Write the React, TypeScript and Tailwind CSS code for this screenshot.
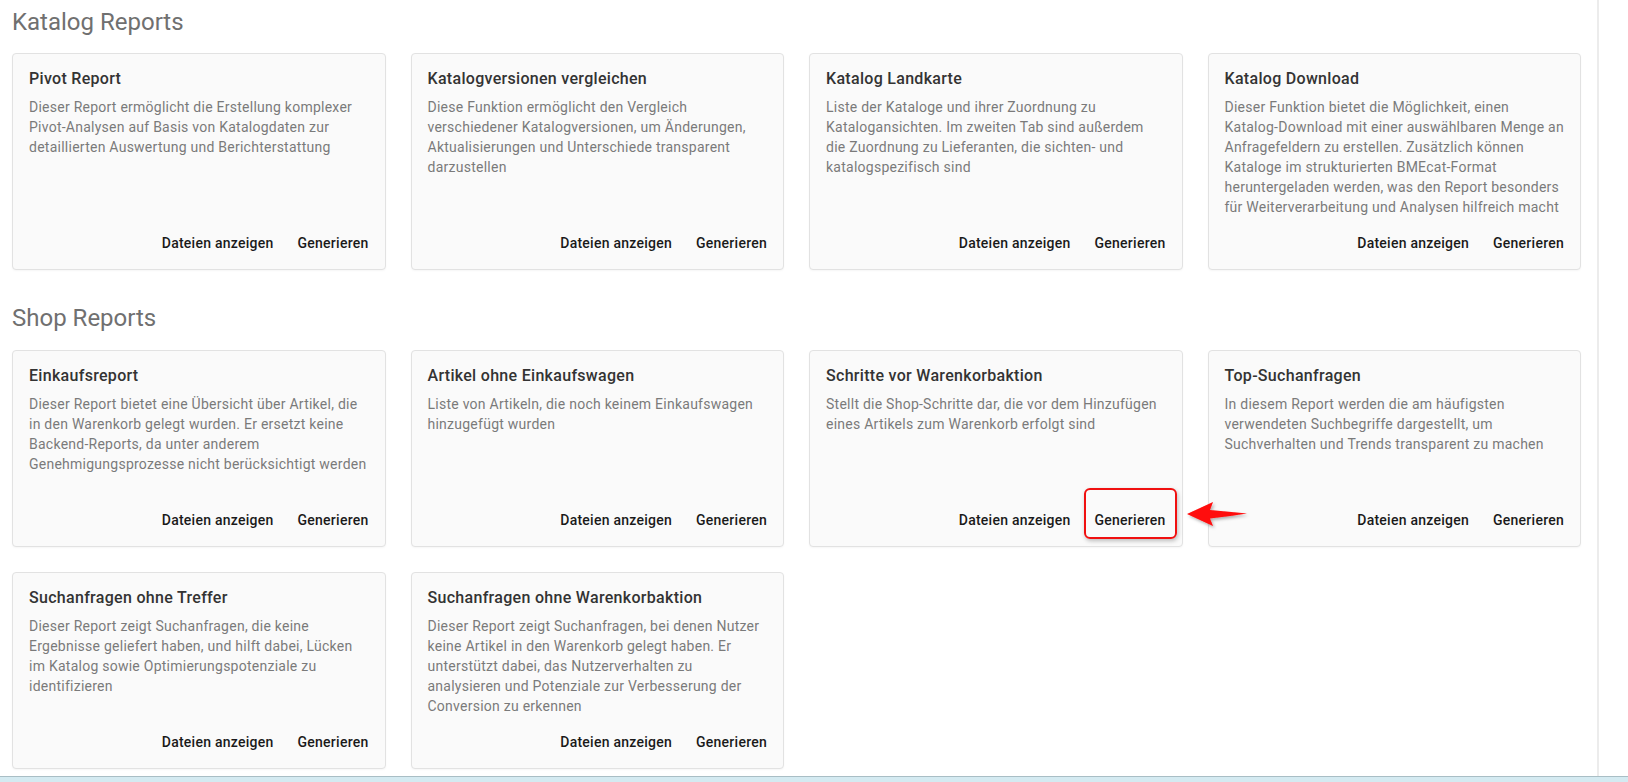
type Report = {
  title: string;
  text: string;
  marked?: boolean;
};

const katalogReports: Report[] = [
  {
    title: "Pivot Report",
    text: "Dieser Report ermöglicht die Erstellung komplexer Pivot-Analysen auf Basis von Katalogdaten zur detaillierten Auswertung und Berichterstattung",
  },
  {
    title: "Katalogversionen vergleichen",
    text: "Diese Funktion ermöglicht den Vergleich verschiedener Katalogversionen, um Änderungen, Aktualisierungen und Unterschiede transparent darzustellen",
  },
  {
    title: "Katalog Landkarte",
    text: "Liste der Kataloge und ihrer Zuordnung zu Katalogansichten. Im zweiten Tab sind außerdem die Zuordnung zu Lieferanten, die sichten- und katalogspezifisch sind",
  },
  {
    title: "Katalog Download",
    text: "Dieser Funktion bietet die Möglichkeit, einen Katalog-Download mit einer auswählbaren Menge an Anfragefeldern zu erstellen. Zusätzlich können Kataloge im strukturierten BMEcat-Format heruntergeladen werden, was den Report besonders für Weiterverarbeitung und Analysen hilfreich macht",
  },
];

const shopReports: Report[] = [
  {
    title: "Einkaufsreport",
    text: "Dieser Report bietet eine Übersicht über Artikel, die in den Warenkorb gelegt wurden. Er ersetzt keine Backend-Reports, da unter anderem Genehmigungsprozesse nicht berücksichtigt werden",
  },
  {
    title: "Artikel ohne Einkaufswagen",
    text: "Liste von Artikeln, die noch keinem Einkaufswagen hinzugefügt wurden",
  },
  {
    title: "Schritte vor Warenkorbaktion",
    text: "Stellt die Shop-Schritte dar, die vor dem Hinzufügen eines Artikels zum Warenkorb erfolgt sind",
    marked: true,
  },
  {
    title: "Top-Suchanfragen",
    text: "In diesem Report werden die am häufigsten verwendeten Suchbegriffe dargestellt, um Suchverhalten und Trends transparent zu machen",
  },
  {
    title: "Suchanfragen ohne Treffer",
    text: "Dieser Report zeigt Suchanfragen, die keine Ergebnisse geliefert haben, und hilft dabei, Lücken im Katalog sowie Optimierungspotenziale zu identifizieren",
  },
  {
    title: "Suchanfragen ohne Warenkorbaktion",
    text: "Dieser Report zeigt Suchanfragen, bei denen Nutzer keine Artikel in den Warenkorb gelegt haben. Er unterstützt dabei, das Nutzerverhalten zu analysieren und Potenziale zur Verbesserung der Conversion zu erkennen",
  },
];

function RedArrow() {
  return (
    <svg
      className="absolute left-[calc(100%+11px)] top-[-5px] overflow-visible"
      width="66"
      height="34"
      viewBox="0 0 66 34"
    >
      <defs>
        <filter id="arrowShadow" x="-20%" y="-40%" width="150%" height="190%">
          <feDropShadow dx="1.5" dy="2" stdDeviation="1.5" floodColor="#000" floodOpacity="0.3" />
        </filter>
      </defs>
      <path
        d="M2 17 L28 5 L25 13 Q44 14.5 62 16.5 Q44 19.5 25 21.5 L28 29 Z"
        fill="#ff0a0a"
        filter="url(#arrowShadow)"
      />
    </svg>
  );
}

function ReportCard({ report }: { report: Report }) {
  return (
    <div className="flex flex-col rounded border border-[#e2e2e2] bg-[#fafafa] shadow-[0_1px_2px_rgba(0,0,0,0.04)]">
      <div className="flex-1 px-4 pt-[15px]">
        <h3 className="text-base leading-5 font-medium tracking-[0.3px] text-[#333333]">{report.title}</h3>
        <p className="mt-2 min-h-[100px] text-sm leading-5 tracking-[0.25px] text-[#7a7a7a]">{report.text}</p>
      </div>
      <div className="flex justify-end gap-2 p-2">
        <button className="h-9 px-2 text-sm font-medium tracking-[0.25px] text-[#1a1a1a]">Dateien anzeigen</button>
        <div className="relative">
          <button className="h-9 px-2 text-sm font-medium tracking-[0.25px] text-[#1a1a1a]">Generieren</button>
          {report.marked && (
            <>
              <div className="pointer-events-none absolute -left-[3px] -right-[3px] -top-[14px] -bottom-px rounded-md border-2 border-[#f01010] shadow-[1px_2px_4px_rgba(0,0,0,0.25)]" />
              <RedArrow />
            </>
          )}
        </div>
      </div>
    </div>
  );
}

export default function App() {
  return (
    <div className="flex h-[782px] w-[1628px] flex-col overflow-hidden bg-white font-['Roboto',sans-serif]">
      <div className="flex min-h-0 flex-1">
        <main className="flex-1 overflow-hidden pl-3 pr-4">
          <h2 className="mt-[6px] mb-[15px] text-2xl leading-8 text-[#707070]">Katalog Reports</h2>
          <div className="grid grid-cols-4 gap-[25px]">
            {katalogReports.map((r) => (
              <ReportCard key={r.title} report={r} />
            ))}
          </div>
          <h2 className="mt-8 mb-[16px] text-2xl leading-8 text-[#707070]">Shop Reports</h2>
          <div className="grid grid-cols-4 gap-[25px]">
            {shopReports.map((r) => (
              <ReportCard key={r.title} report={r} />
            ))}
          </div>
        </main>
        <div className="w-[31px] border-l-2 border-[#ececec] bg-white" />
      </div>
      <div className="h-[6px] border-t border-[#a9bec5] bg-[#d4eaf1]" />
    </div>
  );
}
